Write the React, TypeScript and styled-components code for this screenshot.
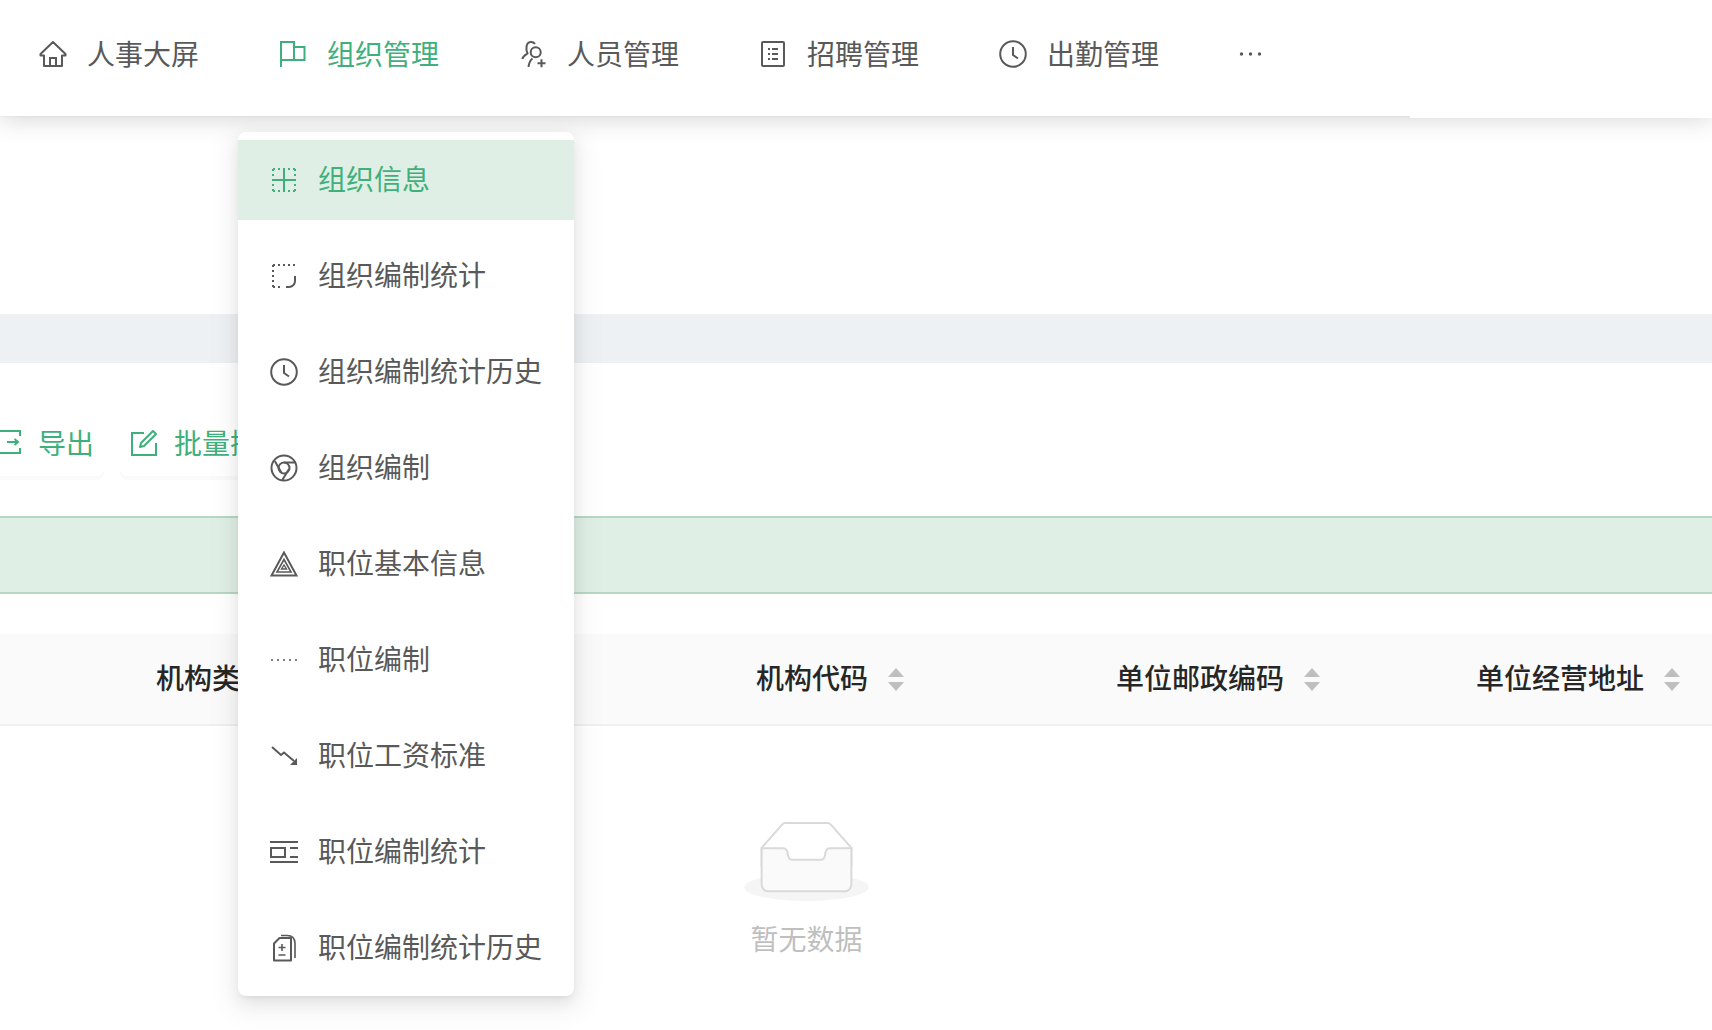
import * as React from 'react'
import styled, { createGlobalStyle } from 'styled-components'

const green = '#3fb07b'
const grey = '#595959'

const GlobalStyle = createGlobalStyle`
  html, body {
    margin: 0;
    padding: 0;
    background: #fff;
  }
  body {
    font-family: "Noto Sans CJK SC", "Liberation Sans", sans-serif;
    font-size: 28px;
    color: ${grey};
  }
`

const Page = styled.div`
  position: relative;
  width: 1712px;
  height: 1030px;
  overflow: hidden;
  background: #fff;
`

const Header = styled.header`
  position: relative;
  z-index: 1;
  display: flex;
  align-items: center;
  height: 116px;
  box-sizing: border-box;
  padding: 0 0 8px;
  background: #fff;
  box-shadow: 0 3px 24px rgba(0, 0, 0, 0.17), 0 1px 2px rgba(0, 0, 0, 0.03);

  &::after {
    content: '';
    position: absolute;
    top: 100%;
    right: 0;
    width: 302px;
    height: 2px;
    background: #fff;
  }
`

const NavList = styled.nav`
  display: flex;
  margin-left: -1px;
`

const NavItem = styled.div<{ $active?: boolean }>`
  display: flex;
  align-items: center;
  gap: 20px;
  padding: 0 40px;
  line-height: 40px;
  color: ${p => (p.$active ? green : grey)};
`

const NavLabel = styled.span`
  margin-bottom: 2px;
`

const Content = styled.main`
  padding-top: 198px;
`

const Band = styled.div`
  height: 49px;
  background: #eef1f4;
`

const Toolbar = styled.div`
  display: flex;
  gap: 16px;
  height: 153px;
  box-sizing: border-box;
  padding-top: 45px;
  margin-left: -16px;
  white-space: nowrap;
`

const ToolButton = styled.button`
  display: flex;
  align-items: center;
  gap: 16px;
  height: 68px;
  padding: 0 10px;
  border: 0;
  border-radius: 8px;
  background: #fff;
  box-shadow: 0 4px 0 #fafafa;
  color: ${green};
  font: inherit;
`

const Banner = styled.div`
  height: 78px;
  box-sizing: border-box;
  border-top: 2px solid #b5d8c2;
  border-bottom: 2px solid #b5d8c2;
  background: #e0efe5;
`

const TableHead = styled.div`
  display: flex;
  align-items: center;
  height: 92px;
  box-sizing: border-box;
  margin-top: 40px;
  padding-left: 156px;
  background: #fafafa;
  border-bottom: 2px solid #f0f0f0;
`

const HeadCell = styled.div<{ $width: number }>`
  display: flex;
  align-items: center;
  flex: 0 0 ${p => p.$width}px;
  gap: 20px;
  color: #262626;
  font-weight: 500;
  white-space: nowrap;
`

const HeadLabel = styled.span`
  margin-bottom: 4px;
`

const Sorter = styled.span`
  display: flex;
  flex-direction: column;
  gap: 5px;
`

const Caret = styled.i<{ $down?: boolean }>`
  display: block;
  width: 0;
  height: 0;
  border-left: 8px solid transparent;
  border-right: 8px solid transparent;
  ${p =>
    p.$down
      ? 'border-top: 9px solid #bfbfbf;'
      : 'border-bottom: 9px solid #bfbfbf;'}
`

const Empty = styled.div`
  display: flex;
  flex-direction: column;
  align-items: center;
  width: 125px;
  margin: 95px 0 0 744px;
  color: #bfbfbf;
`

const EmptyText = styled.div`
  margin-top: 17px;
  line-height: 40px;
  white-space: nowrap;
`

const Menu = styled.ul`
  position: absolute;
  z-index: 2;
  top: 132px;
  left: 238px;
  width: 336px;
  box-sizing: border-box;
  margin: 0;
  padding: 8px 0;
  list-style: none;
  border-radius: 8px;
  background: #fff;
  box-shadow: 0 6px 16px rgba(0, 0, 0, 0.08), 0 3px 6px -4px rgba(0, 0, 0, 0.12),
    0 9px 28px 8px rgba(0, 0, 0, 0.05);
`

const MenuItem = styled.li<{ $active?: boolean }>`
  display: flex;
  align-items: center;
  gap: 20px;
  height: 80px;
  padding-left: 32px;
  color: ${p => (p.$active ? green : grey)};
  background: ${p => (p.$active ? '#e0efe5' : 'transparent')};

  & + & {
    margin-top: 16px;
  }
`

const MenuLabel = styled.span`
  margin-bottom: 4px;
`

const Glyph = styled.svg`
  flex: 0 0 28px;
  width: 28px;
  height: 28px;
  fill: none;
  stroke: currentColor;
  stroke-width: 2;
`

const Solid = styled.circle`
  fill: currentColor;
  stroke: none;
`

const Dotted = styled.path`
  stroke-dasharray: 2 3;
`

const Filled = styled.path`
  fill: currentColor;
  stroke: none;
`

const HomeIcon = () => (
  <Glyph viewBox="0 0 28 28">
    <path d="M14 2 1.500 14v1.500H5V26h18V15.500h3.500V14z" strokeLinejoin="round" />
    <path d="M11 26v-8h6v8" />
  </Glyph>
)

const FlagIcon = () => (
  <Glyph viewBox="0 0 28 28">
    <path d="M2 27V2h13v18" />
    <path d="M15 7h10.500v13H2" />
  </Glyph>
)

const UserPlusIcon = () => (
  <Glyph viewBox="0 0 28 28">
    <path d="M3.300 19C4 16 6 15 8.500 13.500 6.500 9 7 2.500 11.500 2c2-.2 3.500.5 4.500 2" />
    <circle cx="16.700" cy="12.300" r="5" />
    <path d="M9.500 27c.5-4 2-7 4-8.500" />
    <path d="M18.500 23.300h8M22.500 19.300v8" />
  </Glyph>
)

const ListIcon = () => (
  <Glyph viewBox="0 0 28 28">
    <rect x="3" y="2" width="22" height="24" rx="1" />
    <path d="M9 9h2M9 14h2M9 19h2M13 9h6M13 14h6M13 19h6" />
  </Glyph>
)

const ClockIcon = () => (
  <Glyph viewBox="0 0 28 28">
    <circle cx="14" cy="14" r="12.800" />
    <path d="M14 7v8l5 3.500" />
  </Glyph>
)

const MoreIcon = () => (
  <Glyph viewBox="0 0 28 28">
    <Solid cx="2.500" cy="14" r="1.700" />
    <Solid cx="11.500" cy="14" r="1.700" />
    <Solid cx="20.500" cy="14" r="1.700" />
  </Glyph>
)

const BorderInnerIcon = () => (
  <Glyph viewBox="0 0 28 28">
    <path d="M14 2v24M2 14h24" />
    <Dotted d="M3 3h22M3 25h22M3 3v22M25 3v22" />
  </Glyph>
)

const RadiusIcon = () => (
  <Glyph viewBox="0 0 28 28">
    <Dotted d="M3 3h22M3 3v22M3 25h10" />
    <path d="M25 14v5a6 6 0 0 1-6 6h-3" />
  </Glyph>
)

const ChromeIcon = () => (
  <Glyph viewBox="0 0 28 28">
    <circle cx="14" cy="14" r="12.500" />
    <circle cx="14" cy="14" r="5.500" />
    <path d="M14 8.500h11.500M4.800 7l6.500 11.500M12 26.500l7-11.500" />
  </Glyph>
)

const TriangleIcon = () => (
  <Glyph viewBox="0 0 28 28">
    <path d="M14 2.500 1.500 25.500h25z" />
    <path d="M14 9.500 7 22h14z" strokeWidth="1.600" />
    <path d="m14 15-2.500 4h5z" strokeWidth="1.400" />
  </Glyph>
)

const DotsIcon = () => (
  <Glyph viewBox="0 0 28 28">
    {[2, 8, 14, 20, 26].map(cx => (
      <Solid key={cx} cx={cx} cy="14" r="1" />
    ))}
  </Glyph>
)

const FallIcon = () => (
  <Glyph viewBox="0 0 28 28">
    <path d="M2 5l9 8 3-2.500L24 19" />
    <Filled d="M27 16v7h-7z" />
  </Glyph>
)

const BoxLinesIcon = () => (
  <Glyph viewBox="0 0 28 28">
    <path d="M0 4h28M0 24h28M20 10h8M20 19h8" />
    <rect x="1" y="10" width="14" height="9" />
  </Glyph>
)

const DocIcon = () => (
  <Glyph viewBox="0 0 28 28">
    <path d="M9.500 4H21v22.500H4V9.500z" strokeLinejoin="round" />
    <path d="M11 1.500h6c5 0 8 3 8 8V24" strokeWidth="1.600" />
    <path d="M8.500 13.500h7M12 10v7M8.500 21h7" strokeWidth="1.600" />
  </Glyph>
)

const ExportIcon = () => (
  <Glyph viewBox="0 0 28 28">
    <path d="M2 3h24v5M26 20v5H2" />
    <path d="M13 14h11M20.500 11l3.500 3-3.500 3" />
  </Glyph>
)

const EditIcon = () => (
  <Glyph viewBox="0 0 28 28">
    <path d="M14 5H2v22h24V15" />
    <path d="M23 3l3 3L14 18l-4 1 1-4z" strokeLinejoin="round" />
  </Glyph>
)

const EmptyIcon = () => (
  <svg width="125" height="80" viewBox="0 0 64 41">
    <g transform="translate(0 1)" fill="none" fillRule="evenodd">
      <ellipse fill="#f5f5f5" cx="32" cy="33" rx="32" ry="7" />
      <g fillRule="nonzero" stroke="#d9d9d9">
        <path d="M55 12.760L44.854 1.258C44.367.474 43.656 0 42.907 0H21.093c-.749 0-1.460.474-1.947 1.257L9 12.761V22h46v-9.240z" />
        <path
          d="M41.613 15.931c0-1.605.994-2.930 2.227-2.931H55v18.137C55 33.260 53.680 35 52.050 35h-40.100C10.320 35 9 33.259 9 31.137V13h11.160c1.233 0 2.227 1.323 2.227 2.928v.022c0 1.605 1.005 2.901 2.237 2.901h14.752c1.232 0 2.237-1.308 2.237-2.913v-.007z"
          fill="#fafafa"
        />
      </g>
    </g>
  </svg>
)

const navItems = [
  { label: '人事大屏', icon: <HomeIcon /> },
  { label: '组织管理', icon: <FlagIcon />, active: true },
  { label: '人员管理', icon: <UserPlusIcon /> },
  { label: '招聘管理', icon: <ListIcon /> },
  { label: '出勤管理', icon: <ClockIcon /> },
]

const menuItems = [
  { label: '组织信息', icon: <BorderInnerIcon />, active: true },
  { label: '组织编制统计', icon: <RadiusIcon /> },
  { label: '组织编制统计历史', icon: <ClockIcon /> },
  { label: '组织编制', icon: <ChromeIcon /> },
  { label: '职位基本信息', icon: <TriangleIcon /> },
  { label: '职位编制', icon: <DotsIcon /> },
  { label: '职位工资标准', icon: <FallIcon /> },
  { label: '职位编制统计', icon: <BoxLinesIcon /> },
  { label: '职位编制统计历史', icon: <DocIcon /> },
]

const columns = [
  { label: '机构类型', width: 600 },
  { label: '机构代码', width: 360 },
  { label: '单位邮政编码', width: 360 },
  { label: '单位经营地址', width: 236 },
]

export default function App() {
  return (
    <Page>
      <GlobalStyle />
      <Header>
        <NavList>
          {navItems.map(item => (
            <NavItem key={item.label} $active={item.active}>
              {item.icon}
              <NavLabel>{item.label}</NavLabel>
            </NavItem>
          ))}
          <NavItem>
            <MoreIcon />
          </NavItem>
        </NavList>
      </Header>
      <Content>
        <Band />
        <Toolbar>
          <ToolButton>
            <ExportIcon />
            <span>导出</span>
          </ToolButton>
          <ToolButton>
            <EditIcon />
            <span>批量操作</span>
          </ToolButton>
        </Toolbar>
        <Banner />
        <TableHead>
          {columns.map(col => (
            <HeadCell key={col.label} $width={col.width}>
              <HeadLabel>{col.label}</HeadLabel>
              <Sorter>
                <Caret />
                <Caret $down />
              </Sorter>
            </HeadCell>
          ))}
        </TableHead>
        <Empty>
          <EmptyIcon />
          <EmptyText>暂无数据</EmptyText>
        </Empty>
      </Content>
      <Menu>
        {menuItems.map(item => (
          <MenuItem key={item.label} $active={item.active}>
            {item.icon}
            <MenuLabel>{item.label}</MenuLabel>
          </MenuItem>
        ))}
      </Menu>
    </Page>
  )
}
